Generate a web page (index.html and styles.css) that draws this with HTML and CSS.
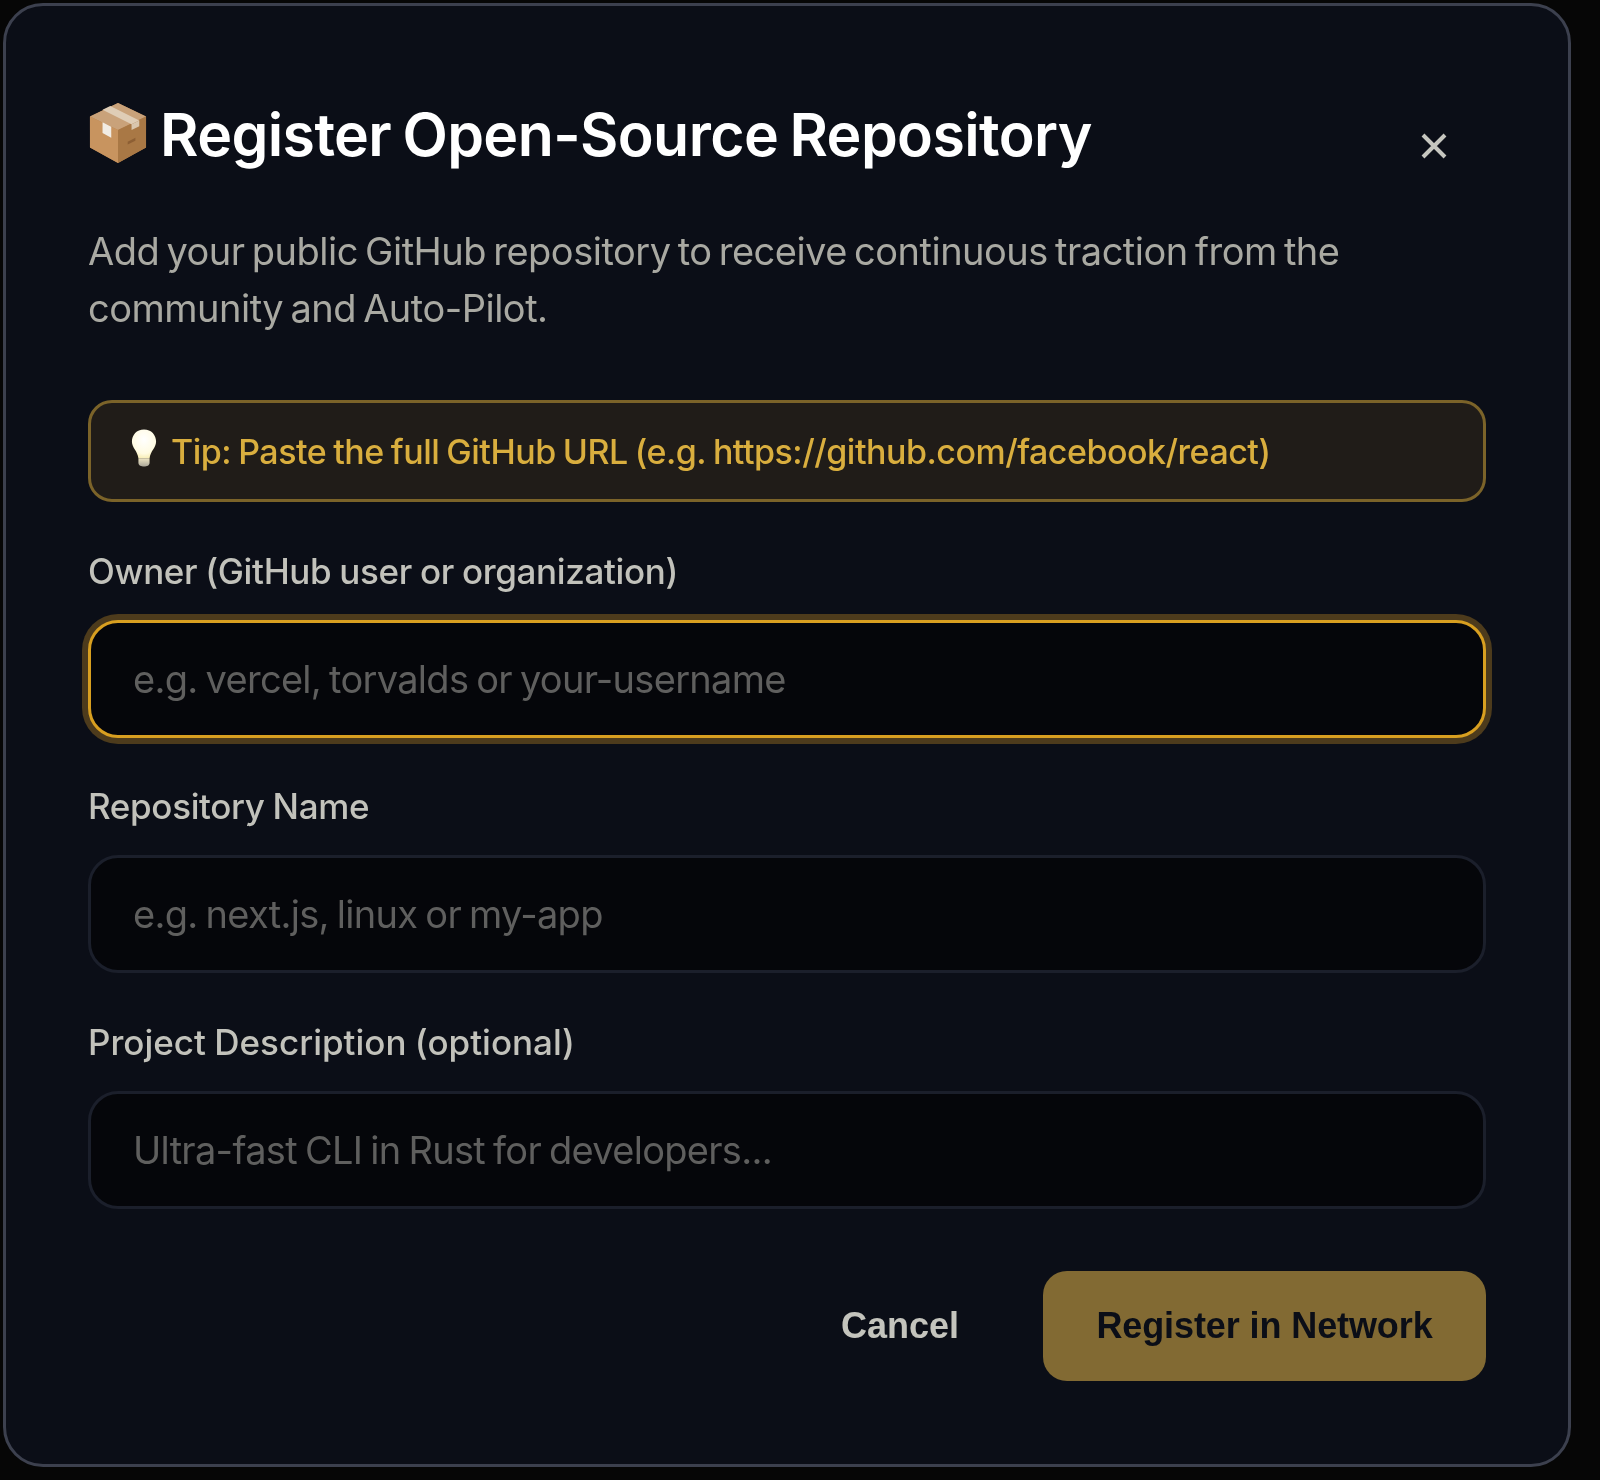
FILE: index.html
```html
<!DOCTYPE html>
<html lang="en">
<head>
<meta charset="utf-8">
<title>Register Open-Source Repository</title>
<link rel="stylesheet" href="styles.css">
</head>
<body>
<div class="modal">
  <div class="head">
    <h1 class="title">
      <svg class="box" viewBox="0 0 60 64" aria-hidden="true">
        <path d="M30 1 L59 15 L59 47 L30 63 L1 47 L1 15 Z" fill="#b5814f"/>
        <path d="M30 1 L59 15 L30 29 L1 15 Z" fill="#c9a27a"/>
        <path d="M1 15 L30 29 L30 63 L1 47 Z" fill="#c8945f"/>
        <path d="M30 29 L59 15 L59 47 L30 63 Z" fill="#a97845"/>
        <path d="M14 8 L44 23 L52 19 L22 4 Z" fill="#dfcdb6"/>
        <path d="M14 21 L23 25.5 L23 37 L14 32 Z" fill="#f1ece4"/>
        <path d="M44 23 L52 19 L52 25 L44 29 Z" fill="#d9c6ae"/>
        <path d="M40 41 L48 37 L48 40 L40 44 Z" fill="#8d5f34"/>
      </svg>
      <span>Register Open-Source Repository</span>
    </h1>
    <button class="close" aria-label="Close">
      <svg viewBox="0 0 26 26"><path d="M2 2 L24 24 M24 2 L2 24"/></svg>
    </button>
  </div>
  <p class="desc">Add your public GitHub repository to receive continuous traction from the community and Auto-Pilot.</p>
  <div class="tip">
    <svg class="bulb" viewBox="0 0 28 42" aria-hidden="true">
      <defs>
        <radialGradient id="glow" cx="50%" cy="35%" r="65%">
          <stop offset="0" stop-color="#ffffff"/>
          <stop offset="0.75" stop-color="#fffbe2"/>
          <stop offset="1" stop-color="#f8eeb8"/>
        </radialGradient>
        <linearGradient id="base" x1="0" y1="0" x2="0" y2="1">
          <stop offset="0" stop-color="#efe6c4"/>
          <stop offset="1" stop-color="#a9a598"/>
        </linearGradient>
      </defs>
      <path d="M14 1 C6 1 1 7 1 14 C1 21 7 24 8 32 L20 32 C21 24 27 21 27 14 C27 7 22 1 14 1 Z" fill="url(#glow)"/>
      <path d="M8 32 L20 32 L20 37 C20 40 17 41 14 41 C11 41 8 40 8 37 Z" fill="url(#base)"/>
    </svg>
    <span>Tip: Paste the full GitHub URL (e.g. https://github.com/facebook/react)</span>
  </div>
  <label class="label">Owner (GitHub user or organization)</label>
  <input class="field focus" placeholder="e.g. vercel, torvalds or your-username">
  <label class="label">Repository Name</label>
  <input class="field" placeholder="e.g. next.js, linux or my-app">
  <label class="label label-wide">Project Description (optional)</label>
  <input class="field" placeholder="Ultra-fast CLI in Rust for developers...">
  <div class="actions">
    <button class="cancel">Cancel</button>
    <button class="submit">Register in Network</button>
  </div>
</div>
</body>
</html>
```
FILE: styles.css
```css
* { box-sizing: border-box; }
html, body { margin: 0; height: 100%; }
body {
  background: #060606;
  font-family: Inter, "Liberation Sans", sans-serif;
  padding: 3px 0 0 3px;
}
.modal {
  width: 1568px;
  height: 1464px;
  background: #0b0e17;
  border: 3px solid #3c404e;
  border-radius: 40px;
  padding: 96px 82px 0;
  filter: blur(0.45px);
}
.head {
  display: flex;
  align-items: flex-start;
  justify-content: space-between;
  height: 70px;
}
.title {
  margin: -1px 0 0;
  display: flex;
  align-items: center;
  gap: 13px;
  font-size: 59px;
  line-height: 68px;
  font-weight: 600;
  letter-spacing: -0.6px;
  word-spacing: -3px;
  color: #fff;
}
.box { width: 58px; height: 62px; flex: none; margin: 0 0 4px 1px; }
.close {
  background: none;
  border: 0;
  padding: 0;
  margin: 31px 39px 0 0;
  width: 26px;
  height: 26px;
  display: block;
}
.close svg { display: block; width: 26px; height: 26px; }
.close path { stroke: #c6c6bf; stroke-width: 4; fill: none; }
.desc {
  margin: 51px 0 0;
  font-size: 38px;
  line-height: 57px;
  color: #a9a9a2;
  letter-spacing: -0.5px;
  word-spacing: -3px;
  max-width: 1370px;
}
.tip {
  margin: 63px 0 2px;
  height: 102px;
  display: flex;
  align-items: center;
  gap: 14px;
  padding: 0 40px;
  background: #201c18;
  border: 3px solid #7b6329;
  border-radius: 24px;
  color: #d9ae3e;
  font-size: 34px;
  letter-spacing: -0.5px;
  word-spacing: -1.5px;
  font-weight: 500;
}
.bulb { width: 26px; height: 40px; flex: none; margin-top: -6px; }
.label {
  display: block;
  margin: 45.5px 0 0;
  height: 47px;
  font-size: 35px;
  line-height: 47px;
  font-weight: 500;
  color: #c2c2bb;
  letter-spacing: -0.35px;
  word-spacing: -1px;
}
.label-wide { letter-spacing: 0; }
.field {
  display: block;
  width: 100%;
  height: 118px;
  margin-top: 25px;
  padding: 0 42px;
  background: #05060a;
  border: 3px solid #1b1f2b;
  border-radius: 30px;
  font: 400 38px Inter, "Liberation Sans", sans-serif;
  letter-spacing: -0.7px;
  word-spacing: -2px;
  color: #ddd;
  outline: none;
}
.field::placeholder { color: #5f5f5e; opacity: 1; }
.field.focus {
  border-color: #d89f20;
  box-shadow: 0 0 0 6px #4d3b1c;
}
.actions {
  display: flex;
  justify-content: flex-end;
  align-items: center;
  gap: 44px;
  margin-top: 62px;
}
.cancel, .submit {
  font-family: "Liberation Sans", Arial, sans-serif;
  font-size: 36px;
  font-weight: 700;
  border: 0;
  height: 110px;
}
.cancel {
  background: none;
  color: #c4c4bd;
  padding: 0 40px;
}
.submit {
  width: 443px;
  background: #826a33;
  color: #0b0e17;
  border-radius: 24px;
  letter-spacing: -0.1px;
  padding: 0;
}
```
